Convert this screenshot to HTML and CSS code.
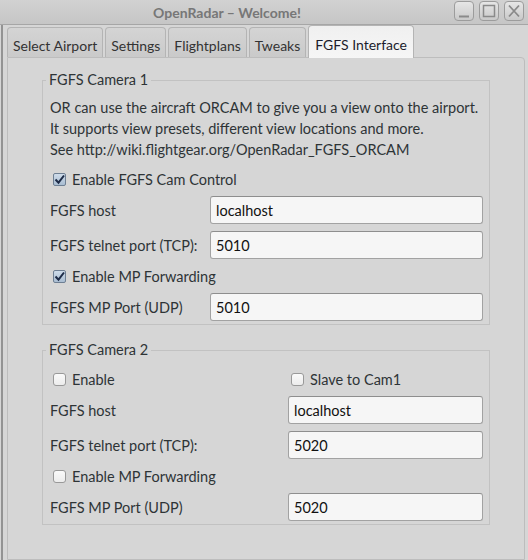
FILE: index.html
```html
<!DOCTYPE html>
<html lang="en">

<head>
    <meta charset="UTF-8">
    <title>OpenRadar – Welcome!</title>
    <link rel="stylesheet" href="styles.css">
</head>

<body>
    <div class="window">
        <!-- 标题栏 -->
        <div class="titlebar">
            <div class="title">OpenRadar – Welcome!</div>
            <div class="wm-buttons">
                <span class="wm-button">
                    <svg width="20" height="20" viewBox="0 0 20 20"><path d="M5 15.5h10" stroke="#8a8a8a" stroke-width="2" /></svg>
                </span>
                <span class="wm-button">
                    <svg width="20" height="20" viewBox="0 0 20 20"><rect x="4.5" y="4.5" width="11" height="11" fill="none" stroke="#8a8a8a" stroke-width="1.5" /></svg>
                </span>
                <span class="wm-button">
                    <svg width="20" height="20" viewBox="0 0 20 20"><path d="M5 4.5l10 11M15 4.5l-10 11" stroke="#8a8a8a" stroke-width="1.8" /></svg>
                </span>
            </div>
        </div>

        <div class="frame">
            <!-- 选项卡 -->
            <div class="tabs">
                <div class="tab">Select Airport</div>
                <div class="tab">Settings</div>
                <div class="tab">Flightplans</div>
                <div class="tab">Tweaks</div>
                <div class="tab active">FGFS Interface</div>
            </div>

            <div class="panel">
                <fieldset class="group">
                    <legend>FGFS Camera 1</legend>
                    <div class="desc">
                        OR can use the aircraft ORCAM to give you a view onto the airport.<br>
                        It supports view presets, different view locations and more.<br>
                        See http://wiki.flightgear.org/OpenRadar_FGFS_ORCAM
                    </div>
                    <div class="form cam1">
                        <label class="checkrow full"><span class="box checked"><svg width="13" height="13" viewBox="0 0 13 13"><path d="M2.5 6.5l3 3.2 5.5-7.2" fill="none" stroke="#1e2c48" stroke-width="2" /></svg></span>Enable FGFS Cam Control</label>
                        <span class="label">FGFS host</span>
                        <div class="field">localhost</div>
                        <span class="label">FGFS telnet port (TCP):</span>
                        <div class="field">5010</div>
                        <label class="checkrow full"><span class="box checked"><svg width="13" height="13" viewBox="0 0 13 13"><path d="M2.5 6.5l3 3.2 5.5-7.2" fill="none" stroke="#1e2c48" stroke-width="2" /></svg></span>Enable MP Forwarding</label>
                        <span class="label">FGFS MP Port (UDP)</span>
                        <div class="field">5010</div>
                    </div>
                </fieldset>

                <fieldset class="group second">
                    <legend>FGFS Camera 2</legend>
                    <div class="form cam2">
                        <label class="checkrow"><span class="box"></span>Enable</label>
                        <label class="checkrow"><span class="box"></span>Slave to Cam1</label>
                        <span class="label">FGFS host</span>
                        <div class="field">localhost</div>
                        <span class="label">FGFS telnet port (TCP):</span>
                        <div class="field">5020</div>
                        <label class="checkrow full"><span class="box"></span>Enable MP Forwarding</label>
                        <span class="label">FGFS MP Port (UDP)</span>
                        <div class="field">5020</div>
                    </div>
                </fieldset>
            </div>
        </div>
    </div>
</body>

</html>
```

FILE: styles.css
```css
/* 整体 */
html,
body {
    margin: 0;
    height: 100%;
}

body {
    background-color: #d6d6d6;
    font-family: "Lato", "Open Sans", sans-serif;
    font-size: 14.5px;
    color: #2e3436;
    overflow: hidden;
}

.window {
    height: 100%;
    display: flex;
    flex-direction: column;
}

/* 标题栏 */
.titlebar {
    height: 24px;
    flex: none;
    display: flex;
    align-items: center;
    background: linear-gradient(#d2d2d2, #c6c6c6);
    border-bottom: 1px solid #a6a6a6;
}

.title {
    flex: 1;
    text-align: center;
    font-weight: bold;
    font-size: 14px;
    color: #777;
    padding-top: 1px;
}

.wm-buttons {
    display: flex;
    gap: 5px;
    padding-right: 4px;
    align-self: flex-start;
    padding-top: 1px;
}

.wm-button {
    width: 20px;
    height: 20px;
    border: 1px solid #9c9c9c;
    border-radius: 4px;
    background: linear-gradient(#e6e6e6, #c9c9c9);
    box-sizing: border-box;
    display: flex;
    align-items: center;
    justify-content: center;
}

.wm-button svg {
    flex: none;
}

/* 窗口主体 */
.frame {
    flex: 1;
    margin-left: 1px;
    border-left: 2px solid #939393;
    padding-left: 4px;
    padding-right: 3px;
    display: flex;
    flex-direction: column;
}

/* 选项卡 */
.tabs {
    display: flex;
    align-items: flex-end;
    gap: 2px;
    height: 33px;
    margin-bottom: -1px;
    position: relative;
    z-index: 1;
    font-size: 14px;
}

.tab {
    height: 30px;
    box-sizing: border-box;
    padding: 9px 5px 0 5px;
    border: 1px solid #b4b4b4;
    border-bottom: none;
    border-radius: 4px 4px 0 0;
    background: linear-gradient(#d4d4d4, #cacaca);
    color: #333;
    white-space: nowrap;
    margin-bottom: 1px;
}

.tab.active {
    height: 33px;
    padding-top: 10px;
    margin-bottom: 0;
    background: linear-gradient(#f0f0f0, #f6f6f6);
    color: #1c1c2c;
    padding-left: 6px;
    padding-right: 6px;
}

.panel {
    flex: 1;
    border: 1px solid #bdbdbd;
    border-radius: 0 4px 0 0;
    padding: 12px 34px 0 34px;
}

/* 分组框 */
.group {
    margin: 0;
    border: 1px solid #c2c2c2;
    padding: 7px 6px 3px 7px;
}

.group.second {
    margin-top: 15px;
    padding-top: 0;
}

.group legend {
    padding: 0 3px;
    margin-left: -4px;
    line-height: 20px;
}

.desc {
    line-height: 21px;
}

/* 表单行 */
.form {
    display: grid;
    row-gap: 7px;
    align-items: center;
}

.cam1 {
    grid-template-columns: 160px 1fr;
    margin-top: 9px;
}

.cam2 {
    grid-template-columns: 238px 1fr;
    margin-top: 9px;
}

.full {
    grid-column: 1 / 3;
}

.label {
    line-height: 20px;
    padding-top: 1px;
}

.checkrow {
    display: flex;
    align-items: center;
    height: 20px;
    padding-left: 3px;
}

.box {
    width: 13px;
    height: 13px;
    box-sizing: border-box;
    border: 1px solid #999;
    border-radius: 3px;
    background: linear-gradient(#fafafa, #ececec);
    margin-right: 6px;
    display: flex;
}

.box.checked {
    border-color: #6e7f93;
    background: linear-gradient(#cfdcea, #a9bdd2);
    border-radius: 2px;
}

.box svg {
    margin: -1px;
    flex: none;
}

/* 输入框 */
.field {
    height: 28px;
    box-sizing: border-box;
    border: 1px solid #a2a2a2;
    border-top-color: #8e8e8e;
    border-radius: 3px;
    background-color: #f6f6f6;
    color: #111;
    padding: 4px 5px 0 5px;
    line-height: 20px;
}
```
